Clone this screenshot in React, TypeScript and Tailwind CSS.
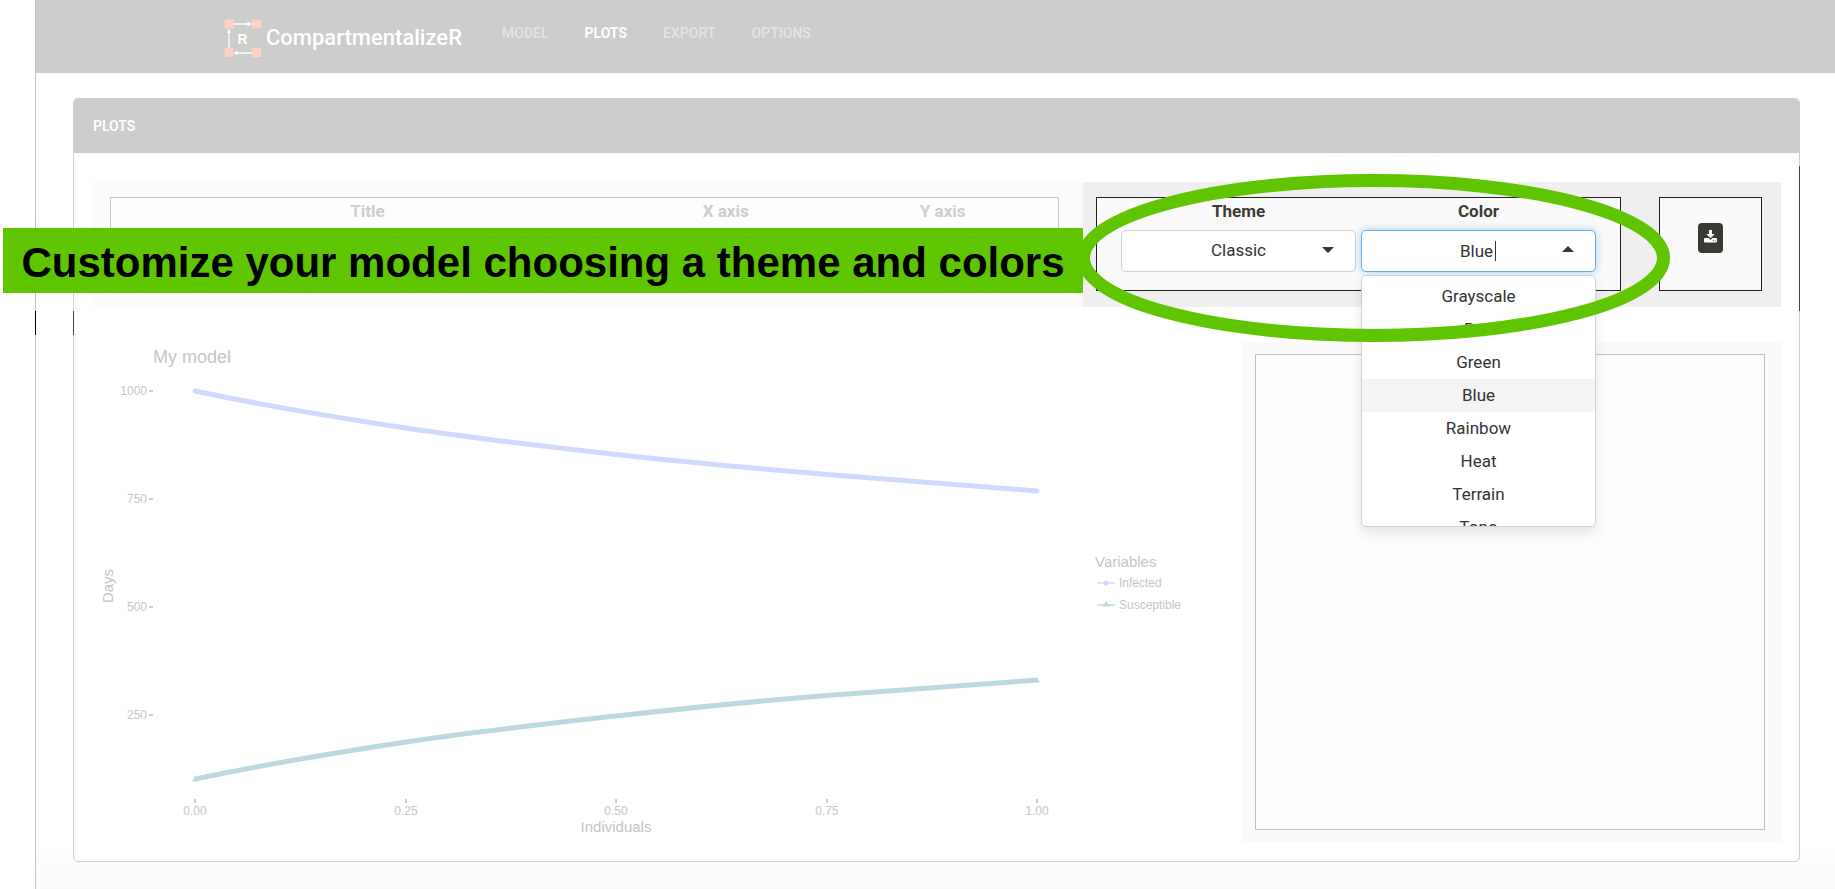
import React from "react";

const colors = ["Grayscale", "Red", "Green", "Blue", "Rainbow", "Heat", "Terrain", "Topo"];
const tabs = ["MODEL", "PLOTS", "EXPORT", "OPTIONS"];

function Logo() {
  return (
    <svg width="38" height="38" viewBox="0 0 38 38" className="shrink-0" aria-hidden="true">
      <g stroke="#fff">
        <path d="M9 5h16M28 34H12" fill="none" strokeWidth="1.6" />
        <path d="M5 29V11" fill="none" strokeWidth="1.2" />
      </g>
      <path d="M28 5l-4.500-2.500v5zM5 9.500l-1.800 4.500h3.600zM9.500 34l4-2.500v5z" fill="#fff" />
      <g fill="#ffd0c4">
        <rect x="0.500" y="0.500" width="9" height="9" />
        <rect x="28" y="0.500" width="9" height="9" />
        <rect x="0.500" y="29" width="9" height="9" />
        <rect x="28" y="29" width="9" height="9" />
      </g>
      <text x="18.500" y="24.500" textAnchor="middle" fontSize="14" fontWeight="700" fill="#fff" fontFamily="Liberation Sans, sans-serif">
        R
      </text>
    </svg>
  );
}

function DownloadIcon() {
  return (
    <svg width="13" height="13" viewBox="0 0 13 13" fill="#fff" aria-hidden="true">
      <path d="M5 0h3v4h2.800L6.500 8.300 2.200 4H5z" />
      <path
        fillRule="evenodd"
        d="M1 8h3.500l2 2 2-2H12a1 1 0 0 1 1 1v2.500a1 1 0 0 1-1 1H1a1 1 0 0 1-1-1V9a1 1 0 0 1 1-1zM8.600 10.200v1h1v-1zM10.700 10.200v1h1v-1z"
      />
    </svg>
  );
}

function Header() {
  return (
    <header className="flex h-[73px] items-start bg-[#cdcdcb] pl-[188px]">
      <a href="#home" className="flex items-center gap-1 pt-[19px] text-[22px] leading-8 font-medium text-white">
        <Logo />
        CompartmentalizeR
      </a>
      <nav className="flex pl-[22px]">
        {tabs.map((tab) => (
          <a
            key={tab}
            href={"#" + tab.toLowerCase()}
            className={
              tab === "PLOTS"
                ? "px-[18px] pt-[23px] text-sm font-bold text-white"
                : "px-[18px] pt-[23px] text-sm font-semibold text-[#e3e3e1]"
            }
          >
            {tab}
          </a>
        ))}
      </nav>
    </header>
  );
}

function Chart() {
  const yTicks = [
    { label: "1000", y: 391 },
    { label: "750", y: 499 },
    { label: "500", y: 607 },
    { label: "250", y: 715 },
  ];
  const xTicks = [
    { label: "0.00", x: 195 },
    { label: "0.25", x: 406 },
    { label: "0.50", x: 616 },
    { label: "0.75", x: 827 },
    { label: "1.00", x: 1037 },
  ];
  return (
    <svg viewBox="92 342 1151 500" className="block h-auto w-full" fontFamily="Liberation Sans, Arial, sans-serif" fill="#c6c6c6">
      <text x="153" y="363" fontSize="18">My model</text>
      {yTicks.map((t) => (
        <g key={t.label}>
          <text x="147" y={t.y + 4} fontSize="12" textAnchor="end">{t.label}</text>
          <path d={`M149 ${t.y}h4`} stroke="#bdbdbd" strokeWidth="1.500" />
        </g>
      ))}
      {xTicks.map((t) => (
        <g key={t.label}>
          <text x={t.x} y="815" fontSize="12" textAnchor="middle">{t.label}</text>
          <path d={`M${t.x} 799v4`} stroke="#bdbdbd" strokeWidth="1.500" />
        </g>
      ))}
      <text x="616" y="832" fontSize="15" textAnchor="middle">Individuals</text>
      <text transform="translate(113 586) rotate(-90)" fontSize="15" textAnchor="middle">Days</text>
      <path
        d="M195 391C265 406 336 417.400 406 428S546 446.700 616 454.500S757 468.500 827 474.500S967 486 1037 491"
        fill="none"
        stroke="#d0daff"
        strokeWidth="5"
        strokeLinecap="round"
      />
      <path
        d="M195 779C265 764.500 336 752.500 406 742S546 723.800 616 716S757 701 827 695.500S967 684.800 1037 680"
        fill="none"
        stroke="#bfd8df"
        strokeWidth="5"
      />
      <path d="M195 776l-3 5.500h6zM1037 677l-2 5.500h5z" fill="#bfd8df" />
      <text x="1095" y="567" fontSize="15">Variables</text>
      <path d="M1097 583h18" stroke="#d0daff" strokeWidth="1.500" />
      <circle cx="1106" cy="583" r="2.500" fill="#d0daff" />
      <path d="M1097 605h18" stroke="#bfd8df" strokeWidth="1.500" />
      <path d="M1106 601l-3.500 5.500h7z" fill="#bfd8df" />
      <text x="1119" y="587" fontSize="12">Infected</text>
      <text x="1119" y="609" fontSize="12">Susceptible</text>
    </svg>
  );
}

function ThemeSelect() {
  return (
    <div className="flex flex-1 flex-col text-center">
      <label htmlFor="theme" className="h-8 leading-[26px] font-bold text-[#3b3b38]">Theme</label>
      <div className="relative">
        <select
          id="theme"
          defaultValue="Classic"
          className="h-[42px] w-full appearance-none rounded-[5px] border border-[#cfcfcf] bg-white [text-align-last:center] text-[#333]"
        >
          <option>Classic</option>
        </select>
        <svg width="12" height="6" viewBox="0 0 12 6" className="pointer-events-none absolute top-[17px] right-[22px]">
          <path d="M0 0h12L6 6z" fill="#333" />
        </svg>
      </div>
    </div>
  );
}

function ColorSelect() {
  return (
    <div className="flex flex-1 flex-col text-center">
      <label htmlFor="color" className="h-8 leading-[26px] font-bold text-[#3b3b38]">Color</label>
      <div className="relative">
        <input
          id="color"
          type="text"
          role="combobox"
          aria-expanded="true"
          aria-controls="color-list"
          defaultValue="Blue"
          className="block h-[42px] w-full rounded-[5px] border border-[#66afe9] bg-white pr-1 text-center text-[#333] shadow-[0_0_8px_rgba(102,175,233,0.6)] outline-none"
        />
        <span className="absolute top-[11px] left-1/2 ml-4 h-5 w-px bg-[#333]" />
        <svg width="12" height="6" viewBox="0 0 12 6" className="pointer-events-none absolute top-4 right-[22px]">
          <path d="M0 6h12L6 0z" fill="#333" />
        </svg>
        <ul
          id="color-list"
          role="listbox"
          className="absolute top-[45px] z-10 h-[252px] w-full overflow-hidden rounded-[5px] border border-[#d2d2d2] bg-white pt-1 shadow-[0_6px_12px_rgba(0,0,0,0.1)]"
        >
          {colors.map((c) => (
            <li
              key={c}
              role="option"
              aria-selected={c === "Blue"}
              className={c === "Blue" ? "bg-[#f4f4f4] leading-[33px] text-[#333]" : "leading-[33px] text-[#333]"}
            >
              {c}
            </li>
          ))}
        </ul>
      </div>
    </div>
  );
}

function Toolbar() {
  return (
    <div className="grid h-[125px] grid-cols-[991fr_698fr]">
      <section className="relative bg-[#fbfbfb] pt-[15px] pr-6 pb-4 pl-[18px]">
        <div className="grid h-full grid-cols-[514fr_204fr_231fr] border border-[#c8c8c8] bg-[#fdfdfd] text-center leading-[26px] font-bold text-[#cecece]">
          <span>Title</span>
          <span>X axis</span>
          <span>Y axis</span>
        </div>
        <p className="absolute top-[46px] right-0 -left-[89px] flex h-[65px] items-center justify-center bg-[#5fc500] pt-1 font-['Liberation_Sans',Arial,sans-serif] text-[42px] font-bold whitespace-nowrap text-black">
          Customize your model choosing a theme and colors
        </p>
      </section>
      <section className="relative flex gap-[38px] bg-[#efefef] pt-[15px] pr-[19px] pb-4 pl-[13px]">
        <div className="flex flex-1 gap-[5px] border border-[#222] bg-[#fafafa] px-6">
          <ThemeSelect />
          <ColorSelect />
        </div>
        <div className="flex w-[103px] items-start justify-center border border-[#222] bg-[#fafafa] pt-[25px]">
          <button aria-label="Download plot" className="flex h-[30px] w-[25px] items-start justify-center rounded bg-[#3b3b36] pt-[7px]">
            <DownloadIcon />
          </button>
        </div>
        <svg viewBox="0 0 593 168" className="pointer-events-none absolute -top-2 -left-1.5 z-20 h-[168px] w-[593px]">
          <ellipse cx="296.500" cy="84" rx="290" ry="77.500" fill="none" stroke="#5fc500" strokeWidth="13" />
        </svg>
      </section>
    </div>
  );
}

export default function App() {
  return (
    <div className="min-h-screen bg-white pl-[35px] font-[Roboto,sans-serif] text-[17px]">
      <div className="relative min-h-screen border-l border-[#c4c4c4] bg-linear-to-b from-white from-95% to-[#fafafa]">
        <span className="absolute top-[311px] -left-px h-6 w-px bg-black" />
        <Header />
        <main className="pt-[25px] pr-[35px] pl-[37px]">
          <section className="relative rounded-[5px] border border-[#cfcfcf] bg-white">
            <span className="absolute top-[212px] -left-px h-6 w-px bg-[#444]" />
            <span className="absolute top-[67px] -right-px h-[145px] w-px bg-[#444]" />
            <h1 className="flex h-[54px] items-center rounded-t bg-[#cdcdcb] pl-[19px] text-sm font-semibold text-white">PLOTS</h1>
            <div className="flex flex-col gap-[35px] pt-[29px] pr-[18px] pb-[19px] pl-[18px]">
              <Toolbar />
              <div className="grid grid-cols-[1151fr_538fr]">
                <Chart />
                <aside className="bg-[#fafafa] pt-3 pr-4 pb-3 pl-3">
                  <div className="h-full border border-[#c0c0c0] bg-[#fdfdfd]" />
                </aside>
              </div>
            </div>
          </section>
        </main>
      </div>
    </div>
  );
}
